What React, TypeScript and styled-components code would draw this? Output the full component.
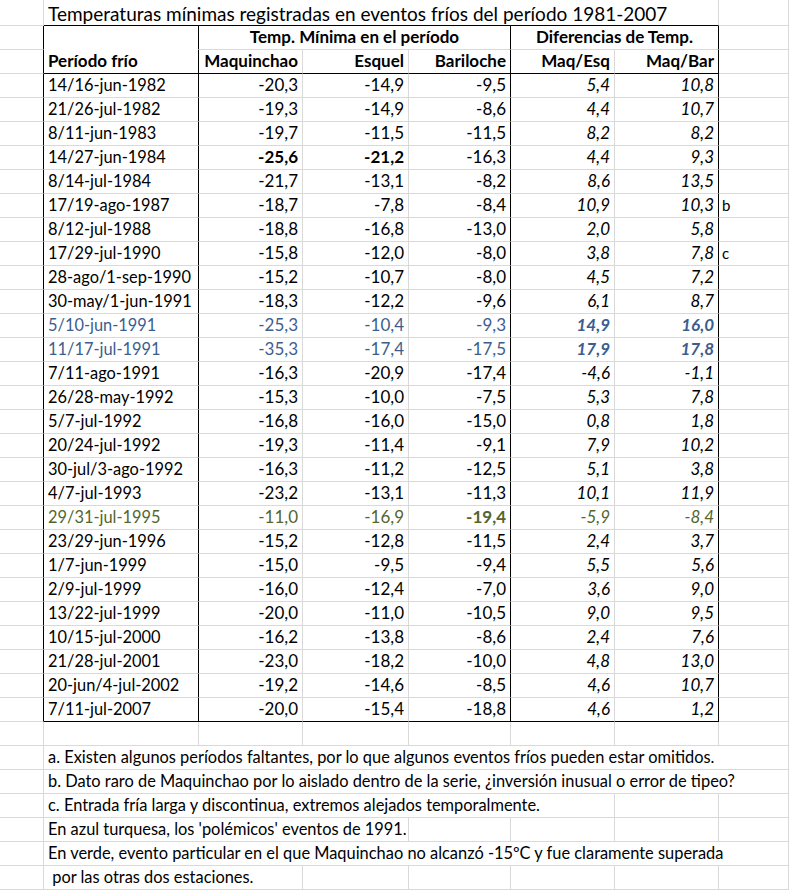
import styled, { createGlobalStyle } from 'styled-components'

const GlobalStyle = createGlobalStyle`
  html, body {
    margin: 0;
    padding: 0;
    background: #ffffff;
    overflow: hidden;
  }
  body {
    font-family: Lato, 'Liberation Sans', sans-serif;
    color: #000000;
  }
`

type Edge = 'g' | 'k' | 'n'

const edgeColor = (e: Edge) =>
  e === 'k' ? '#000000' : e === 'g' ? '#d9d9d9' : 'transparent'

const Sheet = styled.div`
  display: grid;
  grid-template-columns: 44px 155px 104px 106px 102px 104px 104px 70px;
  grid-template-rows: 26px;
  grid-auto-rows: 24px;
  width: 789px;
  height: 891px;
  overflow: hidden;
`

const Cell = styled.div<{
  $span?: number
  $right?: Edge
  $bottom?: Edge
  $align?: 'left' | 'right' | 'center'
  $bold?: boolean
  $italic?: boolean
  $color?: string
  $size?: number
}>`
  box-sizing: border-box;
  grid-column: span ${({ $span }) => $span ?? 1};
  display: flex;
  align-items: flex-end;
  justify-content: ${({ $align }) =>
    $align === 'right' ? 'flex-end' : $align === 'center' ? 'center' : 'flex-start'};
  padding: 0 4px 2px 4px;
  border-right: 1px solid ${({ $right }) => edgeColor($right ?? 'g')};
  border-bottom: 1px solid ${({ $bottom }) => edgeColor($bottom ?? 'g')};
  font-size: ${({ $size }) => $size ?? 16.4}px;
  line-height: 20px;
  font-weight: ${({ $bold }) => ($bold ? 700 : 400)};
  font-style: ${({ $italic }) => ($italic ? 'italic' : 'normal')};
  color: ${({ $color }) => $color ?? '#000000'};
  white-space: pre;
  overflow: visible;
`

const Title = styled(Cell)`
  font-size: 19px;
  padding-bottom: 1px;
`

const HeadCell = styled(Cell)`
  font-size: 17px;
  font-weight: 700;
`

const NoteMark = styled(Cell)`
  font-size: 15px;
  padding-left: 3px;
`

const BLUE = '#3b5e8f'
const GREEN = '#55652c'

type Row = {
  period: string
  values: string[]
  tone?: 'blue' | 'green'
  bold?: number[]
  note?: string
}

const rows: Row[] = [
  { period: '14/16-jun-1982', values: ['-20,3', '-14,9', '-9,5', '5,4', '10,8'] },
  { period: '21/26-jul-1982', values: ['-19,3', '-14,9', '-8,6', '4,4', '10,7'] },
  { period: '8/11-jun-1983', values: ['-19,7', '-11,5', '-11,5', '8,2', '8,2'] },
  { period: '14/27-jun-1984', values: ['-25,6', '-21,2', '-16,3', '4,4', '9,3'], bold: [0, 1] },
  { period: '8/14-jul-1984', values: ['-21,7', '-13,1', '-8,2', '8,6', '13,5'] },
  { period: '17/19-ago-1987', values: ['-18,7', '-7,8', '-8,4', '10,9', '10,3'], note: 'b' },
  { period: '8/12-jul-1988', values: ['-18,8', '-16,8', '-13,0', '2,0', '5,8'] },
  { period: '17/29-jul-1990', values: ['-15,8', '-12,0', '-8,0', '3,8', '7,8'], note: 'c' },
  { period: '28-ago/1-sep-1990', values: ['-15,2', '-10,7', '-8,0', '4,5', '7,2'] },
  { period: '30-may/1-jun-1991', values: ['-18,3', '-12,2', '-9,6', '6,1', '8,7'] },
  { period: '5/10-jun-1991', values: ['-25,3', '-10,4', '-9,3', '14,9', '16,0'], tone: 'blue', bold: [3, 4] },
  { period: '11/17-jul-1991', values: ['-35,3', '-17,4', '-17,5', '17,9', '17,8'], tone: 'blue', bold: [3, 4] },
  { period: '7/11-ago-1991', values: ['-16,3', '-20,9', '-17,4', '-4,6', '-1,1'] },
  { period: '26/28-may-1992', values: ['-15,3', '-10,0', '-7,5', '5,3', '7,8'] },
  { period: '5/7-jul-1992', values: ['-16,8', '-16,0', '-15,0', '0,8', '1,8'] },
  { period: '20/24-jul-1992', values: ['-19,3', '-11,4', '-9,1', '7,9', '10,2'] },
  { period: '30-jul/3-ago-1992', values: ['-16,3', '-11,2', '-12,5', '5,1', '3,8'] },
  { period: '4/7-jul-1993', values: ['-23,2', '-13,1', '-11,3', '10,1', '11,9'] },
  { period: '29/31-jul-1995', values: ['-11,0', '-16,9', '-19,4', '-5,9', '-8,4'], tone: 'green', bold: [2] },
  { period: '23/29-jun-1996', values: ['-15,2', '-12,8', '-11,5', '2,4', '3,7'] },
  { period: '1/7-jun-1999', values: ['-15,0', '-9,5', '-9,4', '5,5', '5,6'] },
  { period: '2/9-jul-1999', values: ['-16,0', '-12,4', '-7,0', '3,6', '9,0'] },
  { period: '13/22-jul-1999', values: ['-20,0', '-11,0', '-10,5', '9,0', '9,5'] },
  { period: '10/15-jul-2000', values: ['-16,2', '-13,8', '-8,6', '2,4', '7,6'] },
  { period: '21/28-jul-2001', values: ['-23,0', '-18,2', '-10,0', '4,8', '13,0'] },
  { period: '20-jun/4-jul-2002', values: ['-19,2', '-14,6', '-8,5', '4,6', '10,7'] },
  { period: '7/11-jul-2007', values: ['-20,0', '-15,4', '-18,8', '4,6', '1,2'] },
]

// right edges of value columns: Maquinchao, Esquel, Bariloche, Maq/Esq, Maq/Bar
const valueEdges: Edge[] = ['g', 'g', 'k', 'g', 'k']

const notes: { text: string; span: number }[] = [
  { text: 'a. Existen algunos períodos faltantes, por lo que algunos eventos fríos pueden estar omitidos.', span: 7 },
  { text: 'b. Dato raro de Maquinchao por lo aislado dentro de la serie, ¿inversión inusual o error de tipeo?', span: 7 },
  { text: 'c. Entrada fría larga y discontinua, extremos alejados temporalmente.', span: 5 },
  { text: "En azul turquesa, los 'polémicos' eventos de 1991.", span: 3 },
  { text: 'En verde, evento particular en el que Maquinchao no alcanzó -15ºC y fue claramente superada', span: 7 },
  { text: ' por las otras dos estaciones.', span: 2 },
]

export default function App() {
  return (
    <>
      <GlobalStyle />
      <Sheet>
        {/* title row */}
        <Cell />
        <Title $span={6} $bottom="k">
          Temperaturas mínimas registradas en eventos fríos del período 1981-2007
        </Title>
        <Cell />

        {/* header row 1 */}
        <Cell $right="k" />
        <Cell $right="k" $bottom="n" />
        <HeadCell $span={3} $right="k" $align="center">
          Temp. Mínima en el período
        </HeadCell>
        <HeadCell $span={2} $right="k" $align="center">
          Diferencias de Temp.
        </HeadCell>
        <Cell />

        {/* header row 2 */}
        <Cell $right="k" />
        <HeadCell $right="k" $bottom="k">
          Período frío
        </HeadCell>
        {['Maquinchao', 'Esquel', 'Bariloche', 'Maq/Esq', 'Maq/Bar'].map((h, i) => (
          <HeadCell key={h} $right={valueEdges[i]} $bottom="k" $align="right">
            {h}
          </HeadCell>
        ))}
        <Cell />

        {/* data rows */}
        {rows.map((r, ri) => {
          const last = ri === rows.length - 1
          const color = r.tone === 'blue' ? BLUE : r.tone === 'green' ? GREEN : undefined
          return [
            <Cell key={`${ri}-a`} $right="k" />,
            <Cell key={`${ri}-p`} $right="k" $bottom={last ? 'k' : 'g'} $color={color}>
              {r.period}
            </Cell>,
            ...r.values.map((v, vi) => (
              <Cell
                key={`${ri}-${vi}`}
                $right={valueEdges[vi]}
                $bottom={last ? 'k' : 'g'}
                $align="right"
                $italic={vi >= 3}
                $bold={r.bold?.includes(vi)}
                $color={color}
                $size={17}
              >
                {v}
              </Cell>
            )),
            <NoteMark key={`${ri}-n`}>{r.note ?? ''}</NoteMark>,
          ]
        })}

        {/* empty row */}
        {Array.from({ length: 8 }).map((_, i) => (
          <Cell key={`e-${i}`} />
        ))}

        {/* notes */}
        {notes.map((n, ni) => [
          <Cell key={`n-${ni}-a`} />,
          <Cell key={`n-${ni}-t`} $span={n.span}>
            {n.text}
          </Cell>,
          ...Array.from({ length: 7 - n.span }).map((_, i) => <Cell key={`n-${ni}-${i}`} />),
        ])}
      </Sheet>
    </>
  )
}
